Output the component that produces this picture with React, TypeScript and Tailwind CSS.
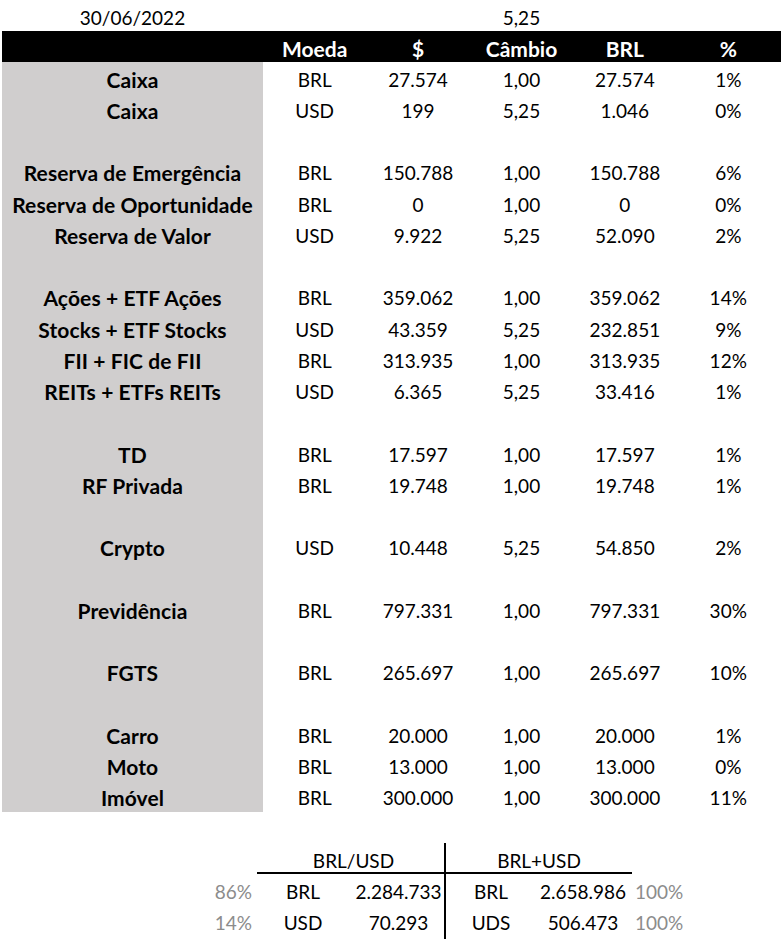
const rows: (null | [string, string, string, string, string, string])[] = [
  ["Caixa", "BRL", "27.574", "1,00", "27.574", "1%"],
  ["Caixa", "USD", "199", "5,25", "1.046", "0%"],
  null,
  ["Reserva de Emergência", "BRL", "150.788", "1,00", "150.788", "6%"],
  ["Reserva de Oportunidade", "BRL", "0", "1,00", "0", "0%"],
  ["Reserva de Valor", "USD", "9.922", "5,25", "52.090", "2%"],
  null,
  ["Ações + ETF Ações", "BRL", "359.062", "1,00", "359.062", "14%"],
  ["Stocks + ETF Stocks", "USD", "43.359", "5,25", "232.851", "9%"],
  ["FII + FIC de FII", "BRL", "313.935", "1,00", "313.935", "12%"],
  ["REITs + ETFs REITs", "USD", "6.365", "5,25", "33.416", "1%"],
  null,
  ["TD", "BRL", "17.597", "1,00", "17.597", "1%"],
  ["RF Privada", "BRL", "19.748", "1,00", "19.748", "1%"],
  null,
  ["Crypto", "USD", "10.448", "5,25", "54.850", "2%"],
  null,
  ["Previdência", "BRL", "797.331", "1,00", "797.331", "30%"],
  null,
  ["FGTS", "BRL", "265.697", "1,00", "265.697", "10%"],
  null,
  ["Carro", "BRL", "20.000", "1,00", "20.000", "1%"],
  ["Moto", "BRL", "13.000", "1,00", "13.000", "0%"],
  ["Imóvel", "BRL", "300.000", "1,00", "300.000", "11%"],
];

const cols = "grid grid-cols-[261px_repeat(5,103.4px)] ml-[2px]";

export default function App() {
  return (
    <div className="w-[781px] h-[939px] bg-white text-black text-[19px] leading-none font-['Lato','Open_Sans',sans-serif] overflow-hidden">
      {/* date row */}
      <div className={`${cols} h-[31px] items-center pt-[3px]`}>
        <div className="text-center">30/06/2022</div>
        <div />
        <div />
        <div className="text-center">5,25</div>
      </div>

      {/* header */}
      <div className={`${cols} h-[31px] items-center pt-[3px] bg-black text-white font-bold text-[21px]`}>
        <div />
        <div className="text-center">Moeda</div>
        <div className="text-center">$</div>
        <div className="text-center">Câmbio</div>
        <div className="text-center">BRL</div>
        <div className="text-center">%</div>
      </div>

      {/* body */}
      {rows.map((r, i) => (
        <div key={i} className={`${cols} h-[31.25px] items-center pt-[3px]`}>
          <div className="bg-[#d0cece] h-[31.25px] -mt-[3px] flex items-center justify-center pt-[3px] font-bold text-[21px] tracking-[0.1px] whitespace-nowrap">
            {r ? r[0] : ""}
          </div>
          {r &&
            r.slice(1).map((v, j) => (
              <div key={j} className="text-center">
                {v}
              </div>
            ))}
        </div>
      ))}

      {/* summary */}
      <div className="mt-[31px] flex">
        <div className="w-[257px] flex flex-col text-right pr-[5px] text-[#8c8c8c]">
          <div className="h-[31px]" />
          <div className="h-[31px] pt-[8px]">86%</div>
          <div className="h-[31px] pt-[8px]">14%</div>
        </div>
        <div className="w-[187px]">
          <div className="h-[31px] pt-[8px] text-center border-b-2 border-black pl-[6px]">BRL/USD</div>
          <div className="flex h-[31px] pt-[8px]">
            <div className="w-[92px] text-center">BRL</div>
            <div className="w-[95px] text-center pl-[4px]">2.284.733</div>
          </div>
          <div className="flex h-[31px] pt-[8px]">
            <div className="w-[92px] text-center">USD</div>
            <div className="w-[95px] text-center pl-[4px]">70.293</div>
          </div>
        </div>
        <div className="w-[2px] bg-black h-[96px]" />
        <div className="w-[186px]">
          <div className="h-[31px] pt-[8px] text-center border-b-2 border-black">BRL+USD</div>
          <div className="flex h-[31px] pt-[8px]">
            <div className="w-[90px] text-center">BRL</div>
            <div className="w-[94px] text-center">2.658.986</div>
          </div>
          <div className="flex h-[31px] pt-[8px]">
            <div className="w-[90px] text-center">UDS</div>
            <div className="w-[94px] text-center">506.473</div>
          </div>
        </div>
        <div className="flex flex-col pl-[3px] text-[#8c8c8c]">
          <div className="h-[31px]" />
          <div className="h-[31px] pt-[8px]">100%</div>
          <div className="h-[31px] pt-[8px]">100%</div>
        </div>
      </div>
    </div>
  );
}
